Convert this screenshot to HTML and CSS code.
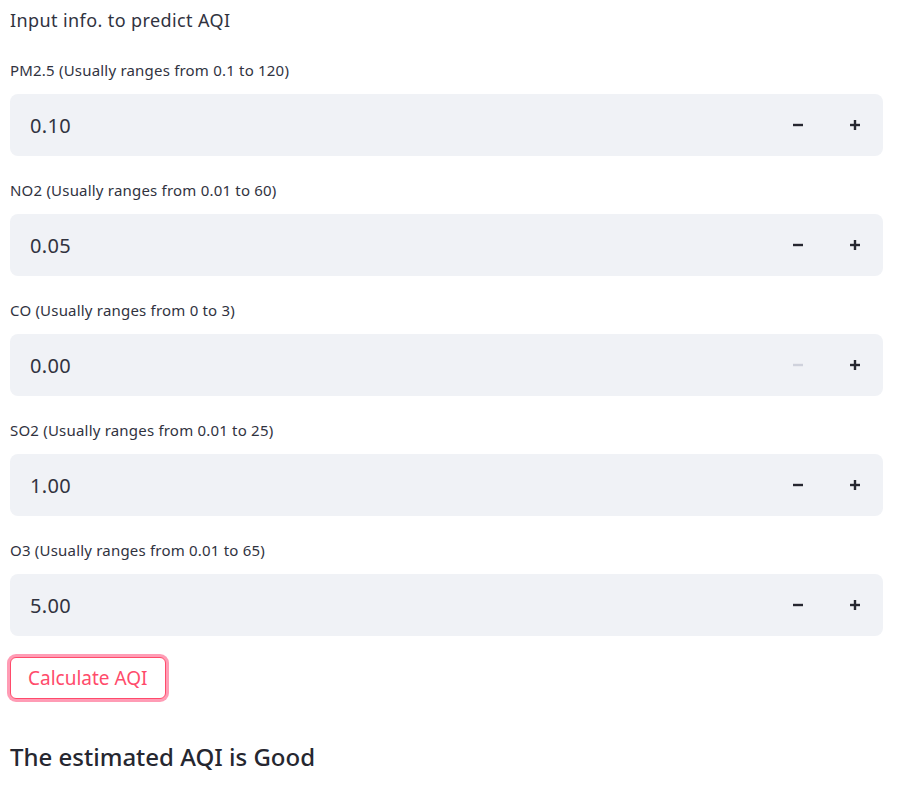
FILE: index.html
```html
<!DOCTYPE html>
<html>
<head>
<meta charset="utf-8">
<link rel="stylesheet" href="styles.css">
</head>
<body>
<main class="app">
  <p class="intro">Input info. to predict AQI</p>

  <div class="field">
    <label class="label">PM2.5 (Usually ranges from 0.1 to 120)</label>
    <div class="number">
      <span class="value">0.10</span>
      <div class="steps">
        <span class="step"><svg width="12" height="12" viewBox="0 0 12 12"><rect x="1" y="4.8" width="10" height="2.4" fill="currentColor"/></svg></span>
        <span class="step"><svg width="12" height="12" viewBox="0 0 12 12"><rect x="1" y="4.8" width="10" height="2.4" fill="currentColor"/><rect x="4.8" y="1" width="2.4" height="10" fill="currentColor"/></svg></span>
      </div>
    </div>
  </div>

  <div class="field">
    <label class="label">NO2 (Usually ranges from 0.01 to 60)</label>
    <div class="number">
      <span class="value">0.05</span>
      <div class="steps">
        <span class="step"><svg width="12" height="12" viewBox="0 0 12 12"><rect x="1" y="4.8" width="10" height="2.4" fill="currentColor"/></svg></span>
        <span class="step"><svg width="12" height="12" viewBox="0 0 12 12"><rect x="1" y="4.8" width="10" height="2.4" fill="currentColor"/><rect x="4.8" y="1" width="2.4" height="10" fill="currentColor"/></svg></span>
      </div>
    </div>
  </div>

  <div class="field">
    <label class="label">CO (Usually ranges from 0 to 3)</label>
    <div class="number">
      <span class="value">0.00</span>
      <div class="steps">
        <span class="step disabled"><svg width="12" height="12" viewBox="0 0 12 12"><rect x="1" y="4.8" width="10" height="2.4" fill="currentColor"/></svg></span>
        <span class="step"><svg width="12" height="12" viewBox="0 0 12 12"><rect x="1" y="4.8" width="10" height="2.4" fill="currentColor"/><rect x="4.8" y="1" width="2.4" height="10" fill="currentColor"/></svg></span>
      </div>
    </div>
  </div>

  <div class="field">
    <label class="label">SO2 (Usually ranges from 0.01 to 25)</label>
    <div class="number">
      <span class="value">1.00</span>
      <div class="steps">
        <span class="step"><svg width="12" height="12" viewBox="0 0 12 12"><rect x="1" y="4.8" width="10" height="2.4" fill="currentColor"/></svg></span>
        <span class="step"><svg width="12" height="12" viewBox="0 0 12 12"><rect x="1" y="4.8" width="10" height="2.4" fill="currentColor"/><rect x="4.8" y="1" width="2.4" height="10" fill="currentColor"/></svg></span>
      </div>
    </div>
  </div>

  <div class="field">
    <label class="label">O3 (Usually ranges from 0.01 to 65)</label>
    <div class="number">
      <span class="value">5.00</span>
      <div class="steps">
        <span class="step"><svg width="12" height="12" viewBox="0 0 12 12"><rect x="1" y="4.8" width="10" height="2.4" fill="currentColor"/></svg></span>
        <span class="step"><svg width="12" height="12" viewBox="0 0 12 12"><rect x="1" y="4.8" width="10" height="2.4" fill="currentColor"/><rect x="4.8" y="1" width="2.4" height="10" fill="currentColor"/></svg></span>
      </div>
    </div>
  </div>

  <div class="actions">
    <button class="btn">Calculate AQI</button>
  </div>

  <h3 class="result">The estimated AQI is Good</h3>
</main>
</body>
</html>
```

FILE: styles.css
```css
* { box-sizing: border-box; }
html, body { margin: 0; padding: 0; background: #ffffff; }
body {
  font-family: "Noto Sans", "Open Sans", sans-serif;
  color: #31333f;
}
.app {
  padding: 0 14px 0 10px;
  display: flex;
  flex-direction: column;
}
.intro {
  margin: 7px 0 0 0;
  font-size: 18px;
  letter-spacing: 0.4px;
  line-height: 26px;
}
.field {
  display: flex;
  flex-direction: column;
}
.label {
  font-size: 15px;
  letter-spacing: 0.2px;
  line-height: 20px;
  margin-top: 24px;
  height: 20px;
}
.field:first-of-type .label { margin-top: 27px; }
.number {
  margin-top: 14px;
  height: 62px;
  background: #f0f2f6;
  border-radius: 8px;
  display: flex;
  align-items: center;
  justify-content: space-between;
}
.value {
  padding-left: 20px;
  font-size: 20px;
  letter-spacing: 0.3px;
  color: #31333f;
}
.steps {
  display: flex;
  align-items: center;
}
.step {
  width: 57px;
  height: 62px;
  display: flex;
  align-items: center;
  justify-content: center;
  color: #262730;
}
.step.disabled { color: #cfd2dc; }
.actions {
  margin-top: 21px;
  display: flex;
}
.btn {
  font-family: inherit;
  font-size: 19px;
  color: #ff4b6b;
  background: #fff;
  border: 1px solid #ff4b6b;
  border-radius: 6px;
  padding: 0 17px;
  height: 42px;
  box-shadow: 0 0 0 3px rgba(255, 75, 120, 0.55);
}
.result {
  margin: 41px 0 0 0;
  font-size: 24px;
  font-weight: 500;
  line-height: 34px;
  color: #262730;
}
```
